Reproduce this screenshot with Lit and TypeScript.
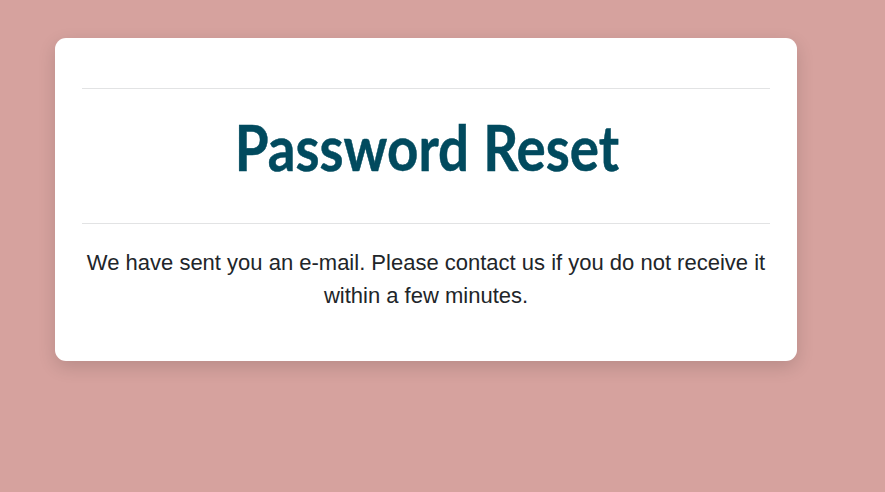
import { LitElement, html, css } from "lit";
import { customElement } from "lit/decorators.js";

@customElement("app-root")
class AppRoot extends LitElement {
  static styles = css`
    :host { display: block; box-sizing: border-box; height: 100vh; overflow: hidden; background: #d6a29e; padding: 38px 88px 0 55px; font-family: "Liberation Sans", Arial, sans-serif; color: #212529; }
    .card { box-sizing: border-box; height: 323px; background: #fff; border-radius: 11px; padding: 50px 27px 0; text-align: center; box-shadow: 0 6px 18px rgba(0,0,0,.14); }
    hr { height: 1px; border: 0; margin: 0; background: #e2e3e4; }
    .title { height: 134px; display: flex; justify-content: center; }
    h1 { margin: 18px 0 0; font: 700 63px/80px Lato, sans-serif; color: #014a5e; white-space: nowrap; word-spacing: 1px; transform: translateX(.5px) scaleX(.868); -webkit-text-stroke: .5px #014a5e; }
    p { margin: 22px 0 0; font-size: 22px; line-height: 33px; }
  `;
  render() {
    return html`<main class="card"><hr><div class="title"><h1>Password Reset</h1></div><hr>
      <p>We have sent you an e-mail. Please contact us if you do not receive it within a few minutes.</p></main>`;
  }
}
